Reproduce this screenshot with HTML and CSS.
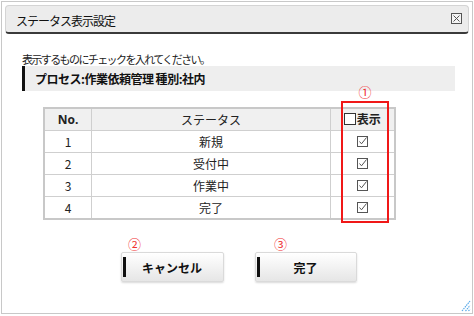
FILE: index.html
```html
<!DOCTYPE html>
<html lang="ja">
<head>
  <meta charset="UTF-8">
  <meta name="viewport" content="width=device-width, initial-scale=1.0">
  <title>ステータス表示設定</title>
  <link rel="stylesheet" href="styles.css">
</head>
<body>
  <div class="dialog">
    <div class="titlebar">
      <span class="title">ステータス表示設定</span>
      <svg class="close" width="11" height="11" viewBox="0 0 11 11">
        <rect x="0.5" y="0.5" width="10" height="10" fill="#f4f4f4" stroke="#555"/>
        <path d="M2.5 2.5 L8.5 8.5 M8.5 2.5 L2.5 8.5" stroke="#555" stroke-width="1"/>
      </svg>
    </div>
    <div class="content">
      <p class="lead">表示するものにチェックを入れてください。</p>
      <div class="process">プロセス:作業依頼管理 種別:社内</div>
      <div class="table-wrap">
        <table class="status-table">
          <colgroup>
            <col class="col-no">
            <col class="col-name">
            <col class="col-show">
          </colgroup>
          <tr>
            <th class="th-no">No.</th>
            <th class="th-name">ステータス</th>
            <th><span class="hdr-check"><svg width="12" height="12" viewBox="0 0 12 12"><rect x="0.5" y="0.5" width="11" height="11" fill="#fff" stroke="#333"/></svg>表示</span></th>
          </tr>
          <tr>
            <td>1</td>
            <td>新規</td>
            <td><svg class="check" width="11" height="11" viewBox="0 0 11 11"><rect x="0.5" y="0.5" width="10" height="10" fill="#fff" stroke="#555"/><path d="M2.5 5.5 L4.5 7.8 L9.5 1.5" fill="none" stroke="#555"/></svg></td>
          </tr>
          <tr>
            <td>2</td>
            <td>受付中</td>
            <td><svg class="check" width="11" height="11" viewBox="0 0 11 11"><rect x="0.5" y="0.5" width="10" height="10" fill="#fff" stroke="#555"/><path d="M2.5 5.5 L4.5 7.8 L9.5 1.5" fill="none" stroke="#555"/></svg></td>
          </tr>
          <tr>
            <td>3</td>
            <td>作業中</td>
            <td><svg class="check" width="11" height="11" viewBox="0 0 11 11"><rect x="0.5" y="0.5" width="10" height="10" fill="#fff" stroke="#555"/><path d="M2.5 5.5 L4.5 7.8 L9.5 1.5" fill="none" stroke="#555"/></svg></td>
          </tr>
          <tr>
            <td>4</td>
            <td>完了</td>
            <td><svg class="check" width="11" height="11" viewBox="0 0 11 11"><rect x="0.5" y="0.5" width="10" height="10" fill="#fff" stroke="#555"/><path d="M2.5 5.5 L4.5 7.8 L9.5 1.5" fill="none" stroke="#555"/></svg></td>
          </tr>
        </table>
        <div class="mark-box"></div>
        <span class="note note-1">①</span>
      </div>
      <div class="actions">
        <div class="btn-wrap">
          <span class="note note-2">②</span>
          <button class="btn btn-cancel">キャンセル</button>
        </div>
        <div class="btn-wrap">
          <span class="note note-3">③</span>
          <button class="btn btn-done">完了</button>
        </div>
      </div>
    </div>
    <svg class="grip" width="10" height="12" viewBox="0 0 10 12">
      <path d="M1 11 L9 1 M4.5 11 L9 5.5 M7.5 11 L9 9" stroke="#5aaae8" stroke-width="1.2" stroke-dasharray="1.5 0.8"/>
    </svg>
  </div>
</body>
</html>
```

FILE: styles.css
```css
body { margin: 0; font-family: "Noto Sans CJK JP", sans-serif; color: #222; background: #fff; }
.dialog { position: relative; box-sizing: border-box; height: 313px; margin: 1px; border: 1px solid #c8c8c8; padding: 3px; }
.titlebar { box-sizing: border-box; height: 29px; display: flex; align-items: center; justify-content: space-between; padding: 2px 6px 0 10px; background: #ececec; border: 1px solid #d4d4d4; border-bottom: 2px solid #3a3a3a; border-radius: 4px; }
.title { font-size: 12px; letter-spacing: -1px; color: #111; }
.close { display: block; margin-top: -3px; }
.content { padding: 0 14px 0 17px; }
.lead { margin: 18px 0 0; font-size: 11px; line-height: 14px; letter-spacing: -1.6px; color: #222; }
.process { height: 25px; line-height: 25px; border-left: 3px solid #111; background: #eeeeee; padding-left: 10px; font-size: 12px; font-weight: bold; letter-spacing: -0.5px; color: #111; }
.table-wrap { position: relative; width: 353px; margin: 16px 0 0 21px; }
.status-table { border-collapse: collapse; width: 353px; border: 2px solid #c8c8c8; font-size: 12px; color: #222; }
.col-no { width: 48px; }
.col-name { width: 240px; }
.col-show { width: 65px; }
.status-table th, .status-table td { border: 1px solid #cfcfcf; padding: 0; height: 21px; text-align: center; line-height: 14px; }
.status-table th { background: #f0f0f0; font-weight: bold; }
.status-table .th-name { font-weight: normal; }
.th-no { font-family: "Open Sans", "Noto Sans CJK JP", sans-serif; }
.hdr-check { display: inline-flex; align-items: center; gap: 1px; }
.hdr-check svg { display: block; }
.check { display: block; margin: 0 auto; }
.mark-box { position: absolute; left: 298px; top: -6px; width: 48px; height: 122px; box-sizing: border-box; border: 2px solid #f01818; }
.note { position: absolute; width: 14px; font-size: 13px; line-height: 14px; text-align: center; color: #f03030; }
.note-1 { left: 315px; top: -22px; }
.actions { display: flex; justify-content: center; gap: 31px; margin-top: 32px; }
.btn-wrap { position: relative; }
.note-2 { left: 7px; top: -15px; }
.note-3 { left: 19px; top: -15px; }
.btn { position: relative; box-sizing: border-box; width: 103px; height: 30px; border: 1px solid #dadada; border-radius: 2px; background: linear-gradient(#ffffff, #e6e6e6); box-shadow: 0 1px 2px rgba(0, 0, 0, 0.15); font-family: "Noto Sans CJK JP", sans-serif; font-size: 12px; font-weight: bold; color: #111; padding: 0; }
.btn::before { content: ""; position: absolute; left: 1px; top: 4px; bottom: 4px; width: 3px; background: #111; }
.btn-done { width: 102px; }
.grip { position: absolute; right: 1px; bottom: 1px; }
```
